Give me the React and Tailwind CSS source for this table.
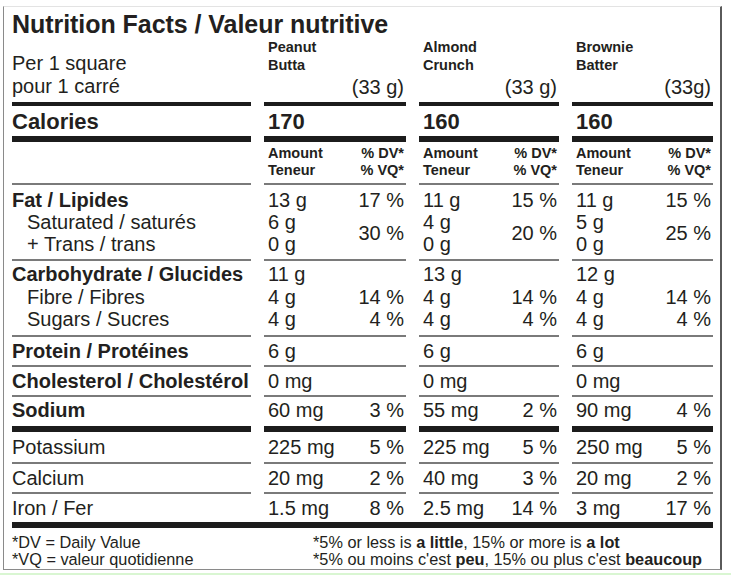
import React from 'react';

const products = [
  {
    name: ['Peanut', 'Butta'], weight: '(33 g)', cal: '170',
    fat: ['13 g', '17 %'], sat: '6 g', trans: '0 g', satDv: '30 %',
    carb: '11 g', fibre: ['4 g', '14 %'], sugars: ['4 g', '4 %'],
    protein: '6 g', chol: '0 mg', sodium: ['60 mg', '3 %'],
    potassium: ['225 mg', '5 %'], calcium: ['20 mg', '2 %'], iron: ['1.5 mg', '8 %'],
  },
  {
    name: ['Almond', 'Crunch'], weight: '(33 g)', cal: '160',
    fat: ['11 g', '15 %'], sat: '4 g', trans: '0 g', satDv: '20 %',
    carb: '13 g', fibre: ['4 g', '14 %'], sugars: ['4 g', '4 %'],
    protein: '6 g', chol: '0 mg', sodium: ['55 mg', '2 %'],
    potassium: ['225 mg', '5 %'], calcium: ['40 mg', '3 %'], iron: ['2.5 mg', '14 %'],
  },
  {
    name: ['Brownie', 'Batter'], weight: '(33g)', cal: '160',
    fat: ['11 g', '15 %'], sat: '5 g', trans: '0 g', satDv: '25 %',
    carb: '12 g', fibre: ['4 g', '14 %'], sugars: ['4 g', '4 %'],
    protein: '6 g', chol: '0 mg', sodium: ['90 mg', '4 %'],
    potassium: ['250 mg', '5 %'], calcium: ['20 mg', '2 %'], iron: ['3 mg', '17 %'],
  },
];

const THIN = 'border-b-2 border-[#7a7a7a]';
const THICK = 'border-b-[6px] border-[#1c1c1c]';

// one grid row: label cell + one cell per product, same rule under each
// (heights below include the rule, box-sizing is border-box)
const Row = ({ label, cell, rule = THIN, h }) => (
  <>
    <div className={`${rule} ${h}`}>{label}</div>
    {products.map((p, i) => (
      <div key={i} className={`${rule} ${h} pl-[4px] pr-[2px]`}>
        {cell(p)}
      </div>
    ))}
  </>
);

const Pair = ({ a, b }) => (
  <div className="flex justify-between">
    <span>{a}</span>
    <span>{b}</span>
  </div>
);

export default function App() {
  return (
    <div className="w-[731px] h-[577px] bg-white overflow-hidden font-['Liberation_Sans',Arial,sans-serif] text-[#231f20]">
      <div className="ml-[3px] mt-[6px] w-[719px] border-t border-t-[#e3e3e3] border-l border-l-[#8a8a8a] border-r-2 border-r-[#5a5a5a] border-b border-b-[#8a8a8a] pl-[8px] pr-[7px] pt-[3px]">
        <h1 className="text-[25px] leading-[28px] font-bold tracking-[-0.05px]">
          Nutrition Facts / Valeur nutritive
        </h1>

        <div className="grid grid-cols-[239px_142px_140px_141px] gap-x-[13px]">
          {/* serving + product names */}
          <div className="border-b-4 border-[#1c1c1c] h-[68px] flex flex-col justify-end pb-[4px] text-[20px] leading-[23px]">
            <div>Per 1 square</div>
            <div>pour 1 carré</div>
          </div>
          {products.map((p, i) => (
            <div key={i} className="border-b-4 border-[#1c1c1c] h-[68px] flex flex-col pl-[4px] pr-[2px]">
              <div className="text-[14.5px] leading-[18px] font-bold">
                <div>{p.name[0]}</div>
                <div>{p.name[1]}</div>
              </div>
              <div className="mt-auto pb-[3px] text-right text-[20px] leading-[23px]">{p.weight}</div>
            </div>
          ))}

          {/* calories */}
          <Row
            rule={THICK}
            h="h-[36px] flex items-center text-[22px] font-bold"
            label="Calories"
            cell={(p) => p.cal}
          />

          {/* column headings */}
          <Row
            h="h-[43px] pt-[3px] text-[14.5px] leading-[17px] font-bold"
            label={null}
            cell={() => (
              <>
                <Pair a="Amount" b="% DV*" />
                <Pair a="Teneur" b="% VQ*" />
              </>
            )}
          />

          {/* fat */}
          <Row
            h="h-[76px] pt-[4px] text-[20px] leading-[22px]"
            label={
              <>
                <div className="font-bold">Fat / Lipides</div>
                <div className="pl-[15px]">Saturated / saturés</div>
                <div className="pl-[15px]">+ Trans / trans</div>
              </>
            }
            cell={(p) => (
              <div className="flex justify-between">
                <div>
                  <div>{p.fat[0]}</div>
                  <div>{p.sat}</div>
                  <div>{p.trans}</div>
                </div>
                <div className="flex flex-col items-end">
                  <div>{p.fat[1]}</div>
                  <div className="flex-1 flex items-center">{p.satDv}</div>
                </div>
              </div>
            )}
          />

          {/* carbohydrate */}
          <Row
            h="h-[76px] pt-[2px] text-[20px] leading-[22.5px]"
            label={
              <>
                <div className="font-bold">Carbohydrate / Glucides</div>
                <div className="pl-[15px]">Fibre / Fibres</div>
                <div className="pl-[15px]">Sugars / Sucres</div>
              </>
            }
            cell={(p) => (
              <>
                <div>{p.carb}</div>
                <Pair a={p.fibre[0]} b={p.fibre[1]} />
                <Pair a={p.sugars[0]} b={p.sugars[1]} />
              </>
            )}
          />

          <Row
            h="h-[30px] flex items-center text-[20px]"
            label={<span className="font-bold">Protein / Protéines</span>}
            cell={(p) => p.protein}
          />
          <Row
            h="h-[30px] flex items-center text-[20px]"
            label={<span className="font-bold">Cholesterol / Cholestérol</span>}
            cell={(p) => p.chol}
          />
          <Row
            rule={THICK}
            h="h-[35px] pb-[3px] flex items-center text-[20px] [&>*]:w-full"
            label={<span className="font-bold">Sodium</span>}
            cell={(p) => <Pair a={p.sodium[0]} b={p.sodium[1]} />}
          />
          <Row
            h="h-[32px] flex items-center text-[20px] [&>*]:w-full"
            label="Potassium"
            cell={(p) => <Pair a={p.potassium[0]} b={p.potassium[1]} />}
          />
          <Row
            h="h-[30px] flex items-center text-[20px] [&>*]:w-full"
            label="Calcium"
            cell={(p) => <Pair a={p.calcium[0]} b={p.calcium[1]} />}
          />
          <Row
            rule="border-b-0"
            h="h-[28px] flex items-center text-[20px] [&>*]:w-full"
            label="Iron / Fer"
            cell={(p) => <Pair a={p.iron[0]} b={p.iron[1]} />}
          />
        </div>

        <div className="h-[6px] bg-[#1c1c1c]" />

        {/* footnotes */}
        <div className="flex pt-[6px] pb-[1px] text-[16.3px] leading-[17px]">
          <div className="w-[301px]">
            <div>*DV = Daily Value</div>
            <div>*VQ = valeur quotidienne</div>
          </div>
          <div>
            <div>
              *5% or less is <b>a little</b>, 15% or more is <b>a lot</b>
            </div>
            <div>
              *5% ou moins c'est <b>peu</b>, 15% ou plus c'est <b>beaucoup</b>
            </div>
          </div>
        </div>
      </div>
      <div className="mt-[3px] h-[2px] w-full bg-[#d9f6d2]" />
    </div>
  );
}
